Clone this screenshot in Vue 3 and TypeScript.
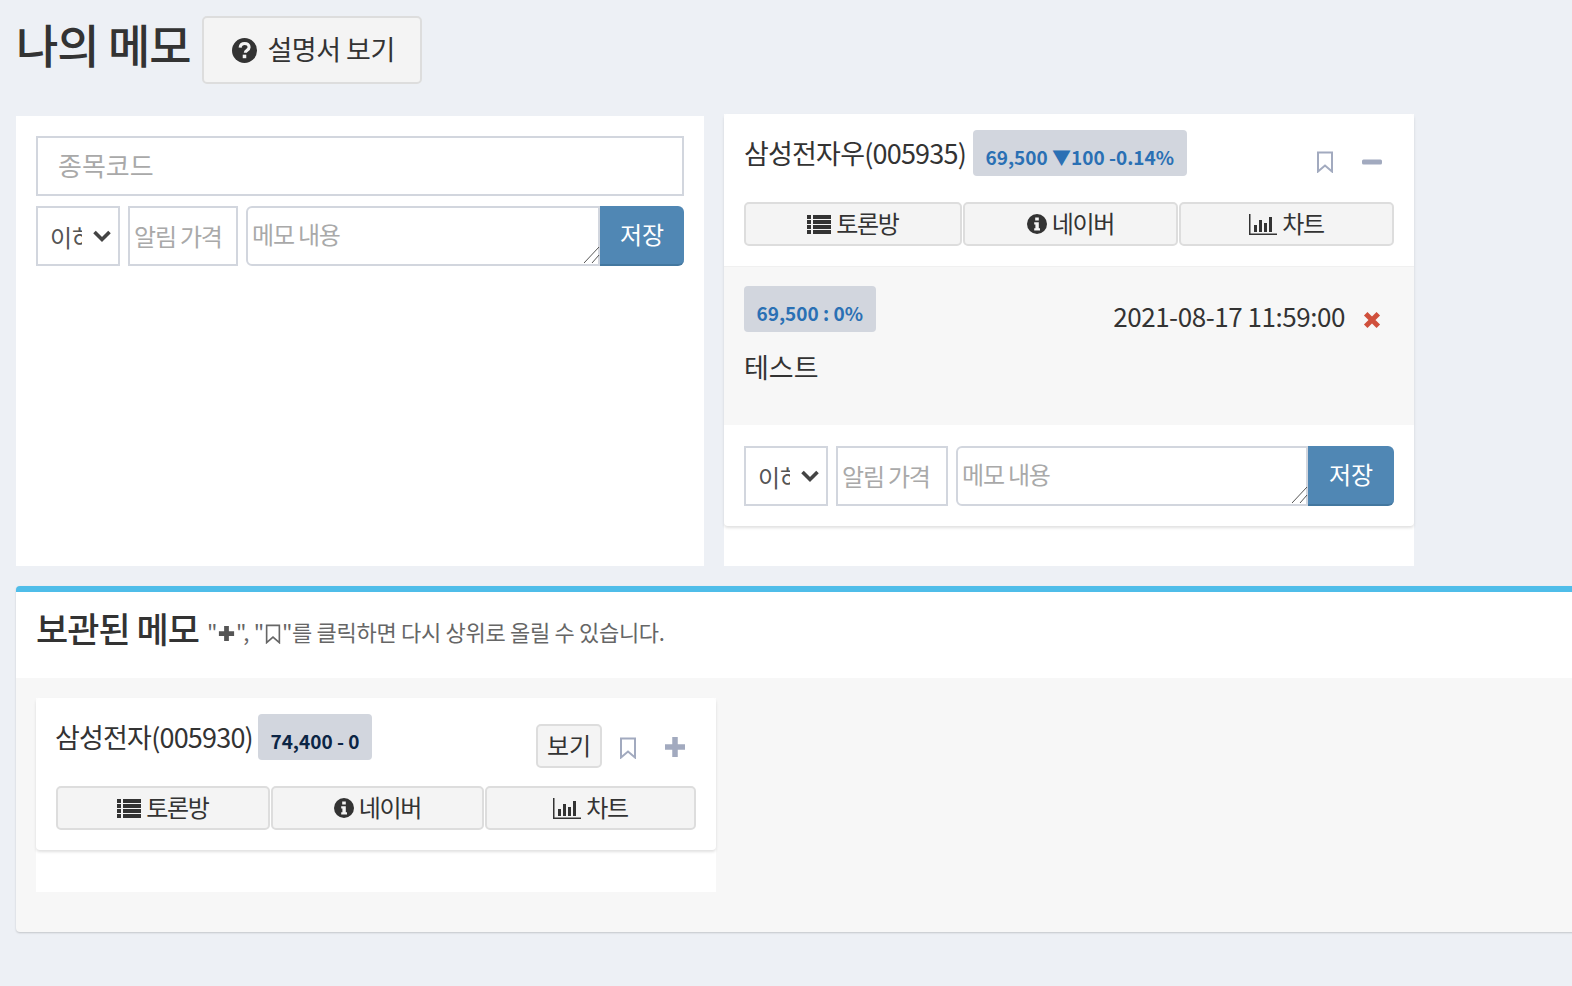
<script setup lang="ts">
interface Action {
  label: string
  icon: 'list' | 'info' | 'chart'
}

const actions: Action[] = [
  { label: '토론방', icon: 'list' },
  { label: '네이버', icon: 'info' },
  { label: '차트', icon: 'chart' },
]
</script>

<template>
  <main class="page">
    <header class="page-head">
      <h1>나의 메모</h1>
      <button class="btn guide-btn" type="button">
        <svg class="icon-help" viewBox="0 0 24 24">
          <circle cx="12" cy="12" r="12" fill="#333" />
          <path d="M7.8 9.2c.3-2.5 2-3.9 4.4-3.9 2.500 0 4.200 1.500 4.200 3.500 0 2.900-3.600 2.900-3.600 5.400" fill="none" stroke="#f4f4f4" stroke-width="3" />
          <rect x="10.300" y="16" width="3.400" height="3.400" fill="#f4f4f4" />
        </svg>
        <span>설명서 보기</span>
      </button>
    </header>

    <div class="top-row">
      <section class="panel new-panel">
        <input class="code-input" type="text" placeholder="종목코드" />
        <form class="memo-form" @submit.prevent>
          <div class="select-wrap">
            <select><option>이하</option><option>이상</option></select>
            <svg class="chevron" viewBox="0 0 20 14"><path d="M2.500 3l7.500 7.500L17.500 3" fill="none" stroke="#444" stroke-width="3.600" /></svg>
          </div>
          <input class="price-input" type="text" placeholder="알림 가격" />
          <div class="memo-group">
            <textarea placeholder="메모 내용"></textarea>
            <svg class="grip" viewBox="0 0 16 16"><path d="M0 16L15 0M8 16l7-8" fill="none" stroke="#555" stroke-width="1" /></svg>
            <button class="save-btn" type="submit"><span>저장</span></button>
          </div>
        </form>
      </section>

      <section class="panel stock-panel">
        <article class="stock-card">
          <div class="card-body">
            <div class="stock-head">
              <span class="stock-name">삼성전자우(005935)</span>
              <span class="price-badge blue">69,500 ▼100 -0.14%</span>
              <div class="tools">
                <svg class="bookmark" viewBox="0 0 18 22"><path d="M2 1.500h14v19l-7-6-7 6z" fill="none" stroke="#a2aabf" stroke-width="2" /></svg>
                <svg class="tool-mark" viewBox="0 0 20 20"><rect y="7.500" width="20" height="5" rx="1.500" fill="#a2aabf" /></svg>
              </div>
            </div>
            <div class="action-row">
              <button v-for="a in actions" :key="a.label" class="btn action-btn" type="button">
                <svg v-if="a.icon === 'list'" class="icon-list" viewBox="0 0 24 19" fill="#333">
                  <path d="M0 0h4v4H0zM6 0h18v4H6zM0 5h4v4H0zM6 5h18v4H6zM0 10h4v4H0zM6 10h18v4H6zM0 15h4v4H0zM6 15h18v4H6z" />
                </svg>
                <svg v-else-if="a.icon === 'info'" class="icon-info" viewBox="0 0 20 20">
                  <circle cx="10" cy="10" r="10" fill="#333" />
                  <path d="M8.200 3.500h3.600v3H8.200zM7.200 8.200h4.600v6h1.200v2.300H7.200v-2.300h1.200v-3.700H7.200z" fill="#f4f4f4" />
                </svg>
                <svg v-else class="icon-chart" viewBox="0 0 28 21" fill="#333">
                  <path d="M0 0h1.500v19.500H28V21H0zM5 11h3v7H5zM10 6h3v12h-3zM15 9h3v9h-3zM20 3h3v15h-3z" />
                </svg>
                <span>{{ a.label }}</span>
              </button>
            </div>
          </div>
          <div class="note">
            <div class="note-head">
              <span class="price-badge blue">69,500 : 0%</span>
              <span class="note-date">2021-08-17 11:59:00</span>
              <svg class="remove" viewBox="0 0 20 20"><path d="M3 3l14 14M17 3L3 17" stroke="#d0503c" stroke-width="5.500" /></svg>
            </div>
            <p class="note-text">테스트</p>
          </div>
          <form class="memo-form card-form" @submit.prevent>
            <div class="select-wrap">
              <select><option>이하</option><option>이상</option></select>
              <svg class="chevron" viewBox="0 0 20 14"><path d="M2.500 3l7.500 7.500L17.500 3" fill="none" stroke="#444" stroke-width="3.600" /></svg>
            </div>
            <input class="price-input" type="text" placeholder="알림 가격" />
            <div class="memo-group">
              <textarea placeholder="메모 내용"></textarea>
              <svg class="grip" viewBox="0 0 16 16"><path d="M0 16L15 0M8 16l7-8" fill="none" stroke="#555" stroke-width="1" /></svg>
              <button class="save-btn" type="submit"><span>저장</span></button>
            </div>
          </form>
        </article>
      </section>
    </div>

    <section class="archive">
      <div class="archive-head">
        <h2>보관된 메모</h2>
        <small>
          "<svg class="mini-plus" viewBox="0 0 20 20"><path d="M10 2v16M2 10h16" stroke="#555" stroke-width="5" /></svg>",
          "<svg class="mini-mark" viewBox="0 0 18 22"><path d="M2 1.500h14v19l-7-6-7 6z" fill="none" stroke="#666" stroke-width="1.800" /></svg>"를 클릭하면 다시 상위로 올릴 수 있습니다.
        </small>
      </div>
      <div class="archive-body">
        <div class="archive-slot">
          <article class="stock-card">
            <div class="card-body archived">
              <div class="stock-head">
                <span class="stock-name">삼성전자(005930)</span>
                <span class="price-badge navy">74,400 - 0</span>
                <div class="tools">
                  <button class="btn view-btn" type="button"><span>보기</span></button>
                  <svg class="bookmark" viewBox="0 0 18 22"><path d="M2 1.500h14v19l-7-6-7 6z" fill="none" stroke="#a2aabf" stroke-width="2" /></svg>
                  <svg class="tool-mark" viewBox="0 0 20 20"><path d="M10 0v20M0 10h20" stroke="#a2aabf" stroke-width="5.500" /></svg>
                </div>
              </div>
              <div class="action-row">
                <button v-for="a in actions" :key="a.label" class="btn action-btn" type="button">
                  <svg v-if="a.icon === 'list'" class="icon-list" viewBox="0 0 24 19" fill="#333">
                    <path d="M0 0h4v4H0zM6 0h18v4H6zM0 5h4v4H0zM6 5h18v4H6zM0 10h4v4H0zM6 10h18v4H6zM0 15h4v4H0zM6 15h18v4H6z" />
                  </svg>
                  <svg v-else-if="a.icon === 'info'" class="icon-info" viewBox="0 0 20 20">
                    <circle cx="10" cy="10" r="10" fill="#333" />
                    <path d="M8.200 3.500h3.600v3H8.200zM7.200 8.200h4.600v6h1.200v2.300H7.200v-2.300h1.200v-3.700H7.200z" fill="#f4f4f4" />
                  </svg>
                  <svg v-else class="icon-chart" viewBox="0 0 28 21" fill="#333">
                    <path d="M0 0h1.500v19.500H28V21H0zM5 11h3v7H5zM10 6h3v12h-3zM15 9h3v9h-3zM20 3h3v15h-3z" />
                  </svg>
                  <span>{{ a.label }}</span>
                </button>
              </div>
            </div>
          </article>
        </div>
      </div>
    </section>
  </main>
</template>

<style>
html,
body {
  background: #edf0f5;
  margin: 0;
  overflow: hidden;
}
</style>

<style scoped>
.page {
  box-sizing: border-box;
  color: #333;
  font-family: "Noto Sans CJK KR", "Noto Sans", sans-serif;
  min-height: 986px;
  padding: 16px 0 0 16px;
  width: 1572px;
}

.page * {
  box-sizing: border-box;
  font-family: inherit;
}

.page-head {
  align-items: flex-start;
  display: flex;
  gap: 11px;
  height: 98px;
}

h1 {
  font-size: 46px;
  font-weight: 500;
  letter-spacing: -1px;
  line-height: 54px;
  margin: 0;
}

.btn {
  background: #f4f4f4;
  border: 2px solid #ddd;
  border-radius: 5px;
  color: #333;
  cursor: pointer;
}

.btn span,
.save-btn span {
  position: relative;
  top: -2px;
}

.guide-btn {
  align-items: center;
  display: flex;
  font-size: 27px;
  gap: 11px;
  height: 68px;
  justify-content: center;
  letter-spacing: -.5px;
  padding: 0 0 0 3px;
  width: 220px;
}

.icon-help {
  height: 25px;
  width: 25px;
}

.top-row {
  align-items: flex-end;
  display: flex;
  gap: 20px;
}

.panel {
  background: #fff;
  height: 452px;
  padding: 20px;
}

.new-panel {
  height: 450px;
  width: 688px;
}

.stock-panel {
  padding: 0;
  width: 690px;
}

input,
select,
textarea {
  background: #fff;
  border: 2px solid #d2d6de;
  color: #555;
  font-size: 24px;
  outline: none;
}

::placeholder {
  color: #a9a9a9;
  opacity: 1;
}

.code-input {
  display: block;
  font-size: 26px;
  height: 60px;
  padding: 0 20px 4px;
  width: 648px;
}

.memo-form {
  display: flex;
  gap: 8px;
  height: 60px;
  margin-top: 10px;
}

.select-wrap {
  flex: 0 0 84px;
  position: relative;
}

select {
  appearance: none;
  border-radius: 0;
  height: 100%;
  padding: 0 36px 0 12px;
  width: 100%;
}

.chevron {
  height: 14px;
  pointer-events: none;
  position: absolute;
  right: 8px;
  top: 23px;
  width: 20px;
}

.price-input {
  flex: 0 0 110px;
  height: 100%;
  letter-spacing: -1.2px;
  padding: 0 4px 2px;
  width: 110px;
}

.memo-group {
  display: flex;
  flex: 1;
  min-width: 0;
  position: relative;
}

textarea {
  border-radius: 6px 0 0 6px;
  flex: 1;
  height: 100%;
  letter-spacing: -1.2px;
  line-height: 34px;
  min-width: 0;
  padding: 9px 4px 0;
  resize: none;
}

.grip {
  bottom: 3px;
  height: 16px;
  position: absolute;
  right: 84px;
  width: 16px;
}

.save-btn {
  background: #5087b4;
  border: 0;
  border-bottom: 2px solid #43779f;
  border-radius: 0 6px 6px 0;
  color: #fff;
  flex: 0 0 84px;
  font-size: 24px;
}

.stock-card {
  background: #fff;
  border-radius: 4px;
  box-shadow: 0 2px 3px rgba(0, 0, 0, .12);
}

.card-body {
  height: 152px;
  padding: 16px 20px 0;
}

.stock-head {
  align-items: flex-start;
  display: flex;
  height: 72px;
}

.stock-name {
  font-size: 27px;
  letter-spacing: -.8px;
  line-height: 46px;
  margin-right: 7px;
}

.price-badge {
  background: #d2d6de;
  border-radius: 4px;
  font-size: 19px;
  font-weight: 700;
  height: 46px;
  line-height: 54px;
  padding: 0 12.5px;
}

.blue {
  color: #2a70b4;
}

.navy {
  color: #0b2545;
}

.tools {
  align-items: center;
  display: flex;
  gap: 28px;
  margin-left: auto;
  margin-top: 21px;
  padding-right: 12px;
}

.bookmark {
  height: 22px;
  width: 18px;
}

.tool-mark {
  height: 20px;
  width: 20px;
}

.action-row {
  display: flex;
  gap: 1px;
}

.action-btn {
  align-items: center;
  display: flex;
  flex: 1;
  font-size: 24px;
  gap: 5px;
  height: 44px;
  justify-content: center;
  letter-spacing: -1.3px;
  padding: 0;
}

.action-btn:first-child {
  flex-grow: 1.014;
}

.archived .action-btn:first-child {
  flex-grow: 1;
}

.archived .action-btn:last-child {
  flex-grow: .986;
}

.icon-list {
  height: 19px;
  width: 24px;
}

.icon-info {
  height: 20px;
  width: 20px;
}

.icon-chart {
  height: 21px;
  width: 28px;
}

.note {
  background: #f7f7f7;
  border-top: 1px solid #f0f0f0;
  height: 159px;
  padding: 16px 20px 0;
}

.note-head {
  align-items: center;
  display: flex;
}

.note-date {
  font-size: 26px;
  letter-spacing: -.45px;
  margin-left: auto;
  margin-top: 14px;
}

.remove {
  height: 18px;
  margin: 22px 13px 0 18px;
  width: 18px;
}

.note-text {
  font-size: 27px;
  line-height: 38px;
  margin: 14px 0 0;
}

.card-form {
  height: 101px;
  margin-top: 0;
  padding: 21px 20px 20px;
}

.card-form .price-input {
  flex-basis: 112px;
  width: 112px;
}

.card-form .save-btn {
  flex-basis: 86px;
}

.card-form .grip {
  right: 86px;
}

.archive {
  background: #f7f7f7;
  border-radius: 4px 0 0 4px;
  border-top: 6px solid #4fbde9;
  box-shadow: 0 1px 2px rgba(0, 0, 0, .18);
  height: 346px;
  margin-right: -16px;
  margin-top: 20px;
}

.archive-head {
  align-items: center;
  background: #fff;
  display: flex;
  gap: 8px;
  height: 86px;
  padding: 0 20px 14px;
}

h2 {
  font-size: 35px;
  font-weight: 500;
  letter-spacing: -1px;
  margin: -2px 0 0;
}

small {
  color: #666;
  font-size: 22px;
  letter-spacing: -.3px;
  margin-top: 6px;
}

.mini-plus {
  height: 19px;
  vertical-align: -2px;
  width: 19px;
}

.mini-mark {
  height: 20px;
  vertical-align: -3px;
  width: 18px;
}

.archive-body {
  padding: 20px;
}

.archive-slot {
  background: #fff;
  height: 194px;
  width: 680px;
}

.archived {
  height: 152px;
}

.archived .stock-name {
  margin-left: -1px;
  margin-right: 5px;
}

.archived .tools {
  gap: 18px;
  padding-right: 11px;
}

.view-btn {
  font-size: 24px;
  height: 44px;
  margin-right: -1px;
  margin-top: -11px;
  padding: 0;
  width: 66px;
}

.archived .bookmark {
  margin-bottom: 8px;
}

.archived .tool-mark {
  margin-bottom: 10px;
  margin-left: 10px;
}
</style>
